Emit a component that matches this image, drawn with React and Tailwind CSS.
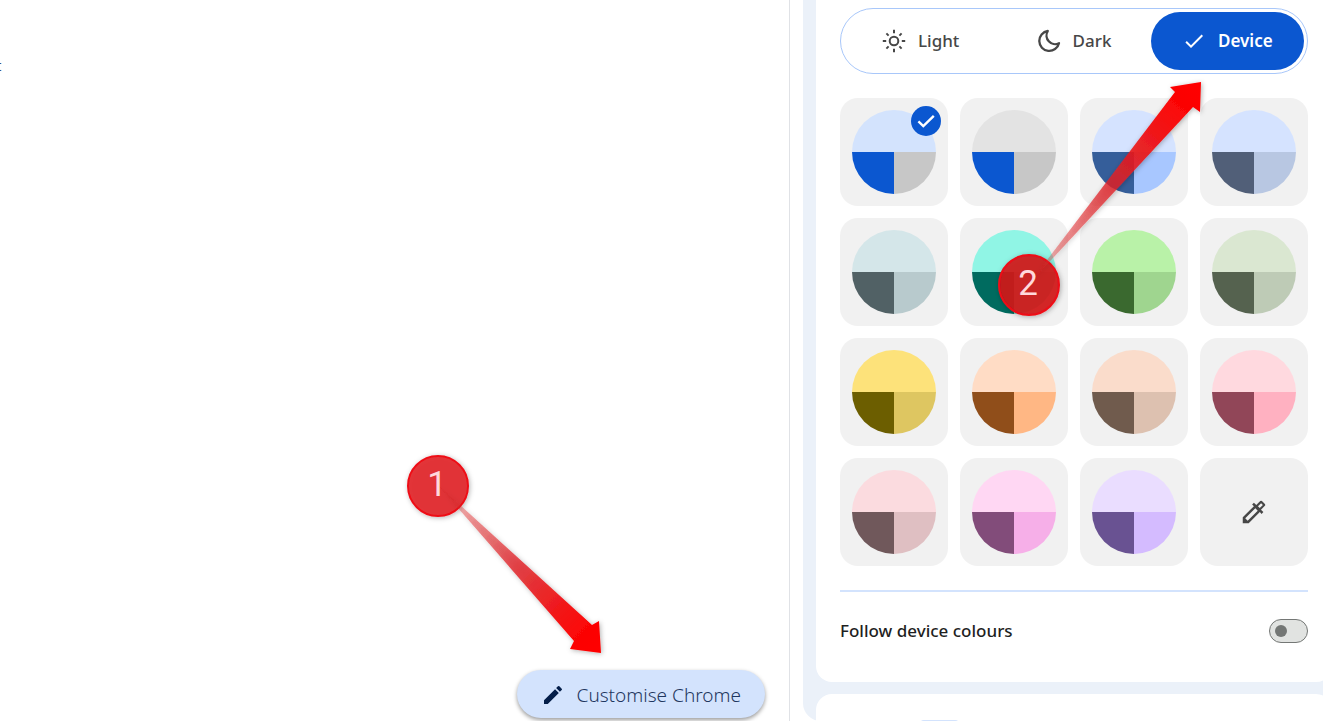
import { MdEdit, MdCheck } from "react-icons/md";

const SWATCHES = [
  { name: "Default", top: "#d3e3fd", left: "#0b57d0", right: "#c7c7c7" },
  { name: "Grey", top: "#e3e3e3", left: "#0b57d0", right: "#c7c7c7" },
  { name: "Blue", top: "#d5e3ff", left: "#355e9a", right: "#a8c7ff" },
  { name: "Cool grey", top: "#d5e3ff", left: "#515f78", right: "#b8c7e2" },
  { name: "Mist", top: "#d4e6e9", left: "#516165", right: "#b8cacd" },
  { name: "Aqua", top: "#90f5e5", left: "#006b5f", right: "#73d9c9" },
  { name: "Green", top: "#b9f2a8", left: "#3a692f", right: "#9fd58f" },
  { name: "Viridian", top: "#dae7d1", left: "#55624f", right: "#becbb6" },
  { name: "Citron", top: "#fde27a", left: "#6c5e00", right: "#dec661" },
  { name: "Orange", top: "#ffdcc5", left: "#904e1a", right: "#ffb784" },
  { name: "Apricot", top: "#fadccb", left: "#705b4d", right: "#ddc1b0" },
  { name: "Rose", top: "#ffd9df", left: "#914658", right: "#ffb1c1" },
  { name: "Pale rose", top: "#fbdbdf", left: "#70585b", right: "#dfbfc2" },
  { name: "Fuchsia", top: "#ffd7f3", left: "#824c7a", right: "#f6afe8" },
  { name: "Violet", top: "#eaddff", left: "#695292", right: "#d4bbff" },
];

function SunIcon() {
  return (
    <svg className="size-6" viewBox="0 0 24 24" fill="none" stroke="currentColor" strokeWidth="2" aria-hidden="true">
      <circle cx="12" cy="12" r="4.3" />
      <path d="M12 .8v3.4M12 19.8v3.4M.8 12h3.4M19.8 12h3.4M4.4 4.4l2.2 2.2M17.4 17.4l2.2 2.2M4.4 19.6l2.2-2.2M17.4 6.6l2.2-2.2" />
    </svg>
  );
}

function MoonIcon() {
  return (
    <svg className="size-6" viewBox="0 0 24 24" fill="none" stroke="currentColor" strokeWidth="2.3" strokeLinejoin="round" aria-hidden="true">
      <path d="M10.8 2A10 10 0 1 0 22 14.2 8.6 8.6 0 0 1 10.8 2Z" />
    </svg>
  );
}

function EyedropperIcon() {
  return (
    <svg className="size-[30px]" viewBox="0 0 24 24" fill="currentColor" fillRule="evenodd" aria-hidden="true">
      <path d="m20.71 5.63-2.34-2.34a.996.996 0 0 0-1.41 0l-3.12 3.12-1.93-1.91-1.41 1.41 1.42 1.42L3 16.25V21h4.75l8.92-8.92 1.42 1.42 1.41-1.41-1.92-1.92 3.12-3.12c.4-.4.4-1.03.01-1.42zM6.92 19 5 17.08l8.06-8.06 1.92 1.92L6.92 19zM17.67 4.9l-2.5 2.5 1.43 1.43 2.5-2.5z" />
    </svg>
  );
}

function Mode({ label, icon, selected }) {
  return (
    <label
      className={
        selected
          ? "relative flex flex-1 items-center justify-center gap-3 rounded-full bg-[#0b57d0] text-white"
          : "relative flex flex-1 items-center justify-center gap-3 rounded-full text-[#474747]"
      }
    >
      <input
        type="radio"
        name="mode"
        defaultChecked={selected}
        className="absolute inset-0 size-full appearance-none rounded-full"
      />
      {icon}
      <span className={selected ? "text-[17px] font-semibold" : "text-[17px] font-medium"}>{label}</span>
    </label>
  );
}

function Swatch({ color, selected }) {
  return (
    <label className="relative aspect-square rounded-[18px] bg-[#f1f1f1] p-3">
      <input
        type="radio"
        name="colour"
        aria-label={color.name}
        defaultChecked={selected}
        className="absolute inset-0 size-full appearance-none rounded-[18px]"
      />
      <svg className="size-full overflow-hidden rounded-full" viewBox="0 0 84 84" aria-hidden="true">
        <rect width="84" height="42" fill={color.top} />
        <rect y="42" width="42" height="42" fill={color.left} />
        <rect x="42" y="42" width="42" height="42" fill={color.right} />
      </svg>
      {selected && (
        <span className="absolute top-2 right-[7px] flex size-[30px] items-center justify-center rounded-full bg-[#0b57d0] text-white">
          <svg className="size-5" viewBox="0 0 20 20" fill="none" stroke="currentColor" strokeWidth="2.4" aria-hidden="true">
            <path d="M2.4 10.4l4.9 4.7L17.8 4.8" />
          </svg>
        </span>
      )}
    </label>
  );
}

function Callout({ number, fill, cx, cy, arrow, from, to, id, className, viewBox }) {
  return (
    <svg className={className} viewBox={viewBox} aria-hidden="true">
      <defs>
        <linearGradient id={id} gradientUnits="userSpaceOnUse" x1={from[0]} y1={from[1]} x2={to[0]} y2={to[1]}>
          <stop offset="0" stopColor="#c02020" stopOpacity="0.1" />
          <stop offset="0.18" stopColor="#e03030" stopOpacity="0.45" />
          <stop offset="0.5" stopColor="#e02127" stopOpacity="0.82" />
          <stop offset="0.85" stopColor="#fa0808" />
          <stop offset="1" stopColor="#ff0000" />
        </linearGradient>
        <filter id={id + "-shadow"} x="-20%" y="-20%" width="140%" height="140%">
          <feDropShadow dx="1" dy="1" stdDeviation="2.4" floodColor="#000" floodOpacity="0.3" />
        </filter>
      </defs>
      <circle cx={cx} cy={cy} r="30" fill={fill} fillOpacity="0.9" stroke="#ee1018" strokeWidth="2" filter={"url(#" + id + "-shadow)"} />
      <path d={arrow} fill={"url(#" + id + ")"} filter={"url(#" + id + "-shadow)"} />
      <text x={cx - 1} y={cy + 10} textAnchor="middle" fill="#ffd9dc" className="font-[Roboto,sans-serif] text-[35px]">
        {number}
      </text>
    </svg>
  );
}

export default function App() {
  return (
    <div className="flex h-screen overflow-hidden bg-white font-['Noto_Sans','Open_Sans',sans-serif]">
      <main className="relative flex min-w-0 flex-1 flex-col justify-between border-r border-[#e0e2e6]">
        <a href="#shortcut" className="mt-[55px] -ml-1 w-2 text-[15px] leading-5 text-[#30507c]">
          t
        </a>
        <button
          type="button"
          className="mr-6 mb-[3px] flex h-12 items-center gap-3 self-end rounded-full bg-[#d3e3fd] px-6 pt-0.5 text-[19px] text-[#1f3760] shadow-[0_2px_4px_rgba(0,0,0,0.4)]"
        >
          <MdEdit className="size-6 text-[#041e49]" />
          <span className="font-light">Customise Chrome</span>
        </button>
        <Callout
          id="arrow-one"
          number="1"
          fill="#e2242a"
          cx={438}
          cy={486}
          from={[437, 485]}
          to={[600, 652]}
          arrow="M437 484L592 625L599 621L601 653L570 649L574 641Z"
          viewBox="390 440 230 230"
          className="pointer-events-none absolute right-[169px] bottom-[51px] size-[230px]"
        />
      </main>

      <aside className="relative -mr-[9px] ml-[13px] flex w-[529px] shrink-0 flex-col gap-3 rounded-bl-[18px] bg-[#ebf1f9] pl-[13px]">
        <section className="rounded-b-2xl bg-white px-6 pt-2 pb-[37px]">
          <div role="radiogroup" aria-label="Mode" className="flex h-[66px] rounded-full border border-[#a8c7fa] p-[3px]">
            <Mode label="Light" icon={<SunIcon />} />
            <Mode label="Dark" icon={<MoonIcon />} />
            <Mode label="Device" icon={<MdCheck className="size-6" />} selected />
          </div>

          <div role="radiogroup" aria-label="Theme colour" className="mt-6 grid grid-cols-4 gap-3">
            {SWATCHES.map((color, i) => (
              <Swatch key={color.name} color={color} selected={i === 0} />
            ))}
            <button
              type="button"
              aria-label="Custom colour"
              className="flex aspect-square items-center justify-center rounded-[18px] bg-[#f1f1f1] text-[#474747]"
            >
              <EyedropperIcon />
            </button>
          </div>

          <hr className="mt-6 border-t-2 border-[#d3e3fd]" />

          <label className="mt-[25px] flex items-center justify-between text-[17px] leading-7 font-medium text-[#1f1f1f]">
            Follow device colours
            <span className="relative flex h-6 w-[39px] items-center rounded-full border border-[#747775] bg-[#e1e3e1] px-[5px]">
              <input type="checkbox" role="switch" className="absolute inset-0 size-full appearance-none rounded-full" />
              <span className="size-3 rounded-full bg-[#747775]" />
            </span>
          </label>
        </section>

        <section className="flex-1 overflow-hidden rounded-t-2xl bg-white pt-[26px] pl-[104px]">
          <div className="h-6 w-[39px] rounded-t bg-[#d3e3fd]" />
        </section>

        <Callout
          id="arrow-two"
          number="2"
          fill="#d3141a"
          cx={1029}
          cy={285}
          from={[1028, 285]}
          to={[1200, 82]}
          arrow="M1028 285L1175 92L1170 87L1201 82L1200 112L1193 107Z"
          viewBox="983 70 240 260"
          className="pointer-events-none absolute top-[70px] right-[109px] h-[260px] w-[240px]"
        />
      </aside>
    </div>
  );
}
